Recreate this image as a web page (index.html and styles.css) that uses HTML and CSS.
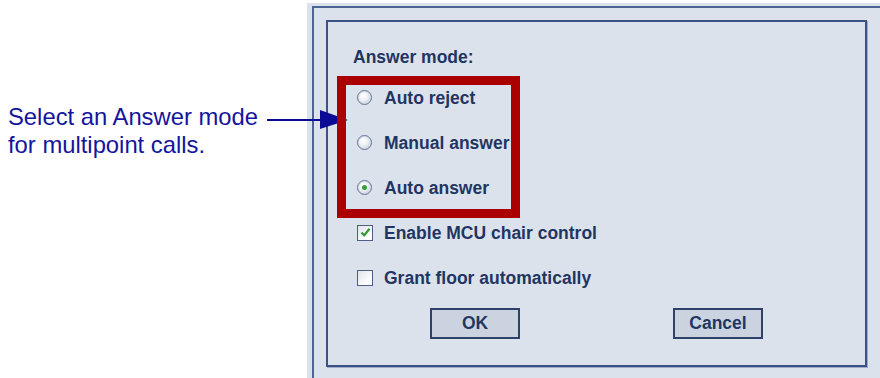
FILE: index.html
```html
<!DOCTYPE html>
<html lang="en">
<head>
    <meta charset="UTF-8">
    <meta name="viewport" content="width=device-width, initial-scale=1.0">
    <title>Answer mode</title>
    <link rel="stylesheet" href="styles.css">
</head>
<body>
    <div class="page">
        <div class="callout">
            <p>Select an Answer mode<br>for multipoint calls.</p>
        </div>

        <div class="outer">
            <div class="frame">
                <div class="dialog">
                    <div class="label">Answer mode:</div>

                    <div class="row">
                        <span class="radio"></span>
                        <span>Auto reject</span>
                    </div>
                    <div class="row">
                        <span class="radio"></span>
                        <span>Manual answer</span>
                    </div>
                    <div class="row">
                        <span class="radio checked"></span>
                        <span>Auto answer</span>
                    </div>
                    <div class="row">
                        <span class="check checked">
                            <svg width="13" height="13" viewBox="0 0 13 13"><path d="M2.5 6.5 L5.2 9.4 L10.5 2.8" fill="none" stroke="#2f9a2f" stroke-width="2.2"/></svg>
                        </span>
                        <span>Enable MCU chair control</span>
                    </div>
                    <div class="row">
                        <span class="check"></span>
                        <span>Grant floor automatically</span>
                    </div>

                    <div class="buttons">
                        <button type="button">OK</button>
                        <button type="button">Cancel</button>
                    </div>
                </div>
            </div>
        </div>

        <!-- annotation -->
        <svg class="arrow" width="100" height="30" viewBox="0 0 100 30">
            <line x1="7" y1="15" x2="62" y2="15" stroke="#0a0a96" stroke-width="2"/>
            <polygon points="60,5 88,15 60,24" fill="#0a0a96"/>
        </svg>
        <div class="highlight"></div>
    </div>
</body>
</html>
```

FILE: styles.css
```css
body {
    margin: 0;
    background-color: #ffffff;
    font-family: "Liberation Sans", Arial, sans-serif;
}

.page {
    position: relative;
    display: flex;
    width: 880px;
    height: 378px;
    overflow: hidden;
}

.callout {
    width: 307px;
    flex-shrink: 0;
}

.callout p {
    margin: 103px 0 0 8px;
    font-size: 23.8px;
    line-height: 28px;
    color: #14149e;
}

.outer {
    flex: 1;
    margin-top: 3px;
    padding: 3px 0 0 5px;
    background-color: #dce2ec;
    display: flex;
}

.frame {
    flex: 1;
    border-top: 2px solid #4d6594;
    border-left: 2px solid #4d6594;
    padding: 12px 0 0 12px;
}

.dialog {
    width: 512px;
    height: 318px;
    border: 2px solid #3b5384;
    box-shadow: 1px 1px 0 #9eabc6;
    padding: 25px 0 0 25px;
    font-weight: bold;
    font-size: 17.5px;
    line-height: 20px;
    color: #1f3562;
}

.label {
    margin-bottom: 8px;
}

.row {
    display: flex;
    align-items: center;
    height: 45px;
    margin-left: 4px;
}

.radio {
    width: 13px;
    height: 13px;
    border: 1px solid #62769a;
    border-radius: 50%;
    background: radial-gradient(circle at 40% 35%, #ffffff 0%, #eef1f5 40%, #b9c1cf 100%);
    box-shadow: inset 0 0 0 1px #d5dbe5;
    margin-right: 12px;
    display: flex;
    align-items: center;
    justify-content: center;
}

.radio.checked::after {
    content: "";
    width: 5px;
    height: 5px;
    border-radius: 50%;
    background-color: #36a036;
}

.check {
    width: 14px;
    height: 14px;
    border: 1px solid #4c5f82;
    background: linear-gradient(135deg, #dfe3ea 0%, #fbfcfd 70%, #ffffff 100%);
    margin-right: 11px;
    display: flex;
    align-items: center;
    justify-content: center;
}

.buttons {
    display: flex;
    gap: 153px;
    margin: 8px 0 0 77px;
}

button {
    width: 90px;
    height: 31px;
    padding: 0;
    border: 2px solid #2f416a;
    background-color: #cbd3e1;
    font-family: inherit;
    font-weight: bold;
    font-size: 17.5px;
    color: #1f3562;
}

.arrow {
    position: absolute;
    left: 260px;
    top: 105px;
}

.highlight {
    position: absolute;
    left: 337px;
    top: 76px;
    width: 183px;
    height: 142px;
    border: 9px solid #aa0000;
    box-sizing: border-box;
}
```
